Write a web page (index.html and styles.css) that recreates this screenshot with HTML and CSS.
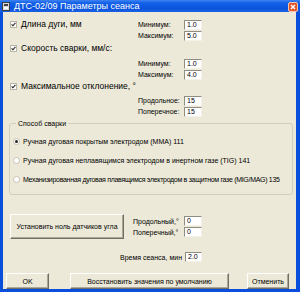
FILE: index.html
```html
<!DOCTYPE html>
<html>
<head>
  <meta charset="UTF-8">
  <title>ДТС-02/09 Параметры сеанса</title>
  <link rel="stylesheet" href="styles.css">
</head>
<body>

<div class="window">
  <!-- Title bar -->
  <div class="titlebar">
    <span class="app-icon">
      <svg width="8" height="9" viewBox="0 0 8 9"><rect x="0.5" y="0.5" width="7" height="8" fill="#d8d8d8" stroke="#404040"/><rect x="2" y="2" width="4" height="2" fill="#404040"/><rect x="2" y="5" width="4" height="2" fill="#ffffff"/></svg>
    </span>
    <span class="title">ДТС-02/09 Параметры сеанса</span>
    <span class="close">
      <svg width="10" height="10" viewBox="0 0 10 10"><rect x="0.5" y="0.5" width="9" height="9" rx="1.5" fill="#e2582c" stroke="#f4c4b0"/><path d="M3 3 L7 7 M7 3 L3 7" stroke="#fff" stroke-width="1.4"/></svg>
    </span>
  </div>

  <div class="client">
    <!-- Arc length -->
    <div class="param param-inline">
      <label class="check-label">
        <svg class="check" width="7" height="7" viewBox="0 0 7 7"><rect x="0.5" y="0.5" width="6" height="6" fill="#fff" stroke="#b9b6a8"/><path d="M1.6 3.4 L2.9 4.8 L5.4 1.9" fill="none" stroke="#222" stroke-width="1.1"/></svg>
        Длина дуги, мм
      </label>
      <div class="field"><span>Минимум:</span><span class="edit">1.0</span></div>
      <div class="field"><span>Максимум:</span><span class="edit">5.0</span></div>
    </div>

    <!-- Welding speed -->
    <div class="param param-block speed">
      <label class="check-label">
        <svg class="check" width="7" height="7" viewBox="0 0 7 7"><rect x="0.5" y="0.5" width="6" height="6" fill="#fff" stroke="#b9b6a8"/><path d="M1.6 3.4 L2.9 4.8 L5.4 1.9" fill="none" stroke="#222" stroke-width="1.1"/></svg>
        Скорость сварки, мм/с:
      </label>
      <div class="field"><span>Минимум:</span><span class="edit">1.0</span></div>
      <div class="field"><span>Максимум:</span><span class="edit">4.0</span></div>
    </div>

    <!-- Max deviation -->
    <div class="param param-block deviation">
      <label class="check-label">
        <svg class="check" width="7" height="7" viewBox="0 0 7 7"><rect x="0.5" y="0.5" width="6" height="6" fill="#fff" stroke="#b9b6a8"/><path d="M1.6 3.4 L2.9 4.8 L5.4 1.9" fill="none" stroke="#222" stroke-width="1.1"/></svg>
        Максимальное отклонение, °
      </label>
      <div class="field"><span>Продольное:</span><span class="edit">15</span></div>
      <div class="field"><span>Поперечное:</span><span class="edit">15</span></div>
    </div>

    <!-- Welding method -->
    <fieldset class="method">
      <legend>Способ сварки</legend>
      <div class="radio"><span class="radio-dot checked"></span>Ручная дуговая покрытым электродом (MMA) 111</div>
      <div class="radio"><span class="radio-dot"></span>Ручная дуговая неплавящимся электродом в инертном газе (TIG) 141</div>
      <div class="radio tight"><span class="radio-dot"></span>Механизированная дуговая плавящимся электродом в защитном газе (MIG/MAG) 135</div>
    </fieldset>

    <!-- Angle sensors -->
    <div class="sensors">
      <button class="btn zero-btn">Установить ноль датчиков угла</button>
      <div class="sensor-fields">
        <div class="field"><span>Продольный,°</span><span class="edit">0</span></div>
        <div class="field"><span>Поперечный,°</span><span class="edit">0</span></div>
      </div>
    </div>

    <div class="time">
      <span>Время сеанса, мин</span><span class="edit">2.0</span>
    </div>

    <div class="actions">
      <button class="btn ok-btn">OK</button>
      <button class="btn reset-btn">Восстановить значения по умолчанию</button>
      <button class="btn cancel-btn">Отменить</button>
    </div>
  </div>
</div>

</body>
</html>
```

FILE: styles.css
```css
* {
  box-sizing: border-box;
}

body {
  margin: 0;
  font-family: "Liberation Sans", Arial, sans-serif;
  background: #ffffff;
}

/* Window frame */
.window {
  width: 300px;
  height: 292px;
  display: flex;
  flex-direction: column;
  background: #0a4fdc;
}

.titlebar {
  height: 14px;
  display: flex;
  align-items: center;
  padding: 0 2px 0 2px;
  background: linear-gradient(#3f83f2 0%, #1261e8 25%, #0a54dd 70%, #1a60e4 100%);
  color: #ffffff;
  font-size: 9px;
}

.app-icon {
  display: flex;
  width: 9px;
  margin-right: 3px;
}

.title {
  flex: 1;
  white-space: nowrap;
}

.close {
  display: flex;
  margin-top: 1px;
}

.client {
  flex: 1;
  margin: 0 4px 3px 3px;
  padding: 7px 3px 0 6px;
  background: #ece9d8;
  font-size: 7px;
  color: #000000;
}

/* Parameter blocks */
.param {
  display: grid;
  grid-template-columns: 129px 64px;
  width: 193px;
}

.check-label {
  display: flex;
  align-items: center;
  gap: 4px;
  padding-left: 1px;
  font-size: 8.5px;
  height: 10px;
  white-space: nowrap;
}

.check {
  flex: none;
}

.param-inline .check-label {
  grid-row: 1 / span 2;
  align-self: start;
}

.param-block .check-label {
  grid-column: 1 / -1;
}

.speed {
  margin-top: 2px;
}

.speed .check-label {
  margin-bottom: 5px;
}

.deviation {
  margin-top: 1px;
}

.deviation .check-label {
  margin-bottom: 4px;
}

.field {
  grid-column: 2;
  display: flex;
  align-items: center;
  justify-content: space-between;
  height: 11px;
  white-space: nowrap;
}

.edit {
  display: block;
  width: 18px;
  height: 10px;
  line-height: 8px;
  padding: 0 2px;
  background: #ffffff;
  border: 1px solid;
  border-color: #8f8d82 #f4f2e8 #f4f2e8 #8f8d82;
  font-size: 7px;
}

/* Group box */
.method {
  margin: 2px 0 0 0;
  padding: 4px 0 5px 3px;
  border: 1px solid #d0cebf;
  border-radius: 3px;
}

.method legend {
  padding: 0 2px;
  margin-left: 3px;
  line-height: 9px;
  font-size: 7px;
}

.radio {
  display: flex;
  align-items: center;
  gap: 3px;
  height: 19px;
  white-space: nowrap;
}

.radio.tight {
  letter-spacing: -0.3px;
}

.radio-dot {
  width: 7px;
  height: 7px;
  border-radius: 50%;
  background: #ffffff;
  border: 1px solid #c4c1b3;
  display: flex;
  align-items: center;
  justify-content: center;
}

.radio-dot.checked::after {
  content: "";
  width: 3px;
  height: 3px;
  border-radius: 50%;
  background: #222222;
}

/* Buttons */
.btn {
  font-family: "Liberation Sans", Arial, sans-serif;
  font-size: 7px;
  color: #000000;
  background: #ece9d8;
  border: 1px solid;
  border-color: #ffffff #716f64 #716f64 #ffffff;
  box-shadow: inset -1px -1px #aca899;
  padding: 0;
  white-space: nowrap;
}

.sensors {
  display: flex;
  align-items: center;
  margin-top: 19px;
}

.zero-btn {
  width: 114px;
  height: 25px;
  margin-left: 1px;
}

.sensor-fields {
  margin-left: 9px;
  width: 69px;
}

.time {
  display: flex;
  align-items: center;
  justify-content: flex-end;
  gap: 3px;
  width: 193px;
  height: 10px;
  margin-top: 13px;
}

.time .edit {
  width: 17px;
}

.actions {
  display: flex;
  margin-top: 11px;
  margin-left: -3px;
}

.actions .btn {
  height: 16px;
}

.ok-btn {
  width: 43px;
}

.reset-btn {
  width: 159px;
  margin-left: 21px;
}

.cancel-btn {
  width: 42px;
  margin-left: 18px;
}
```
